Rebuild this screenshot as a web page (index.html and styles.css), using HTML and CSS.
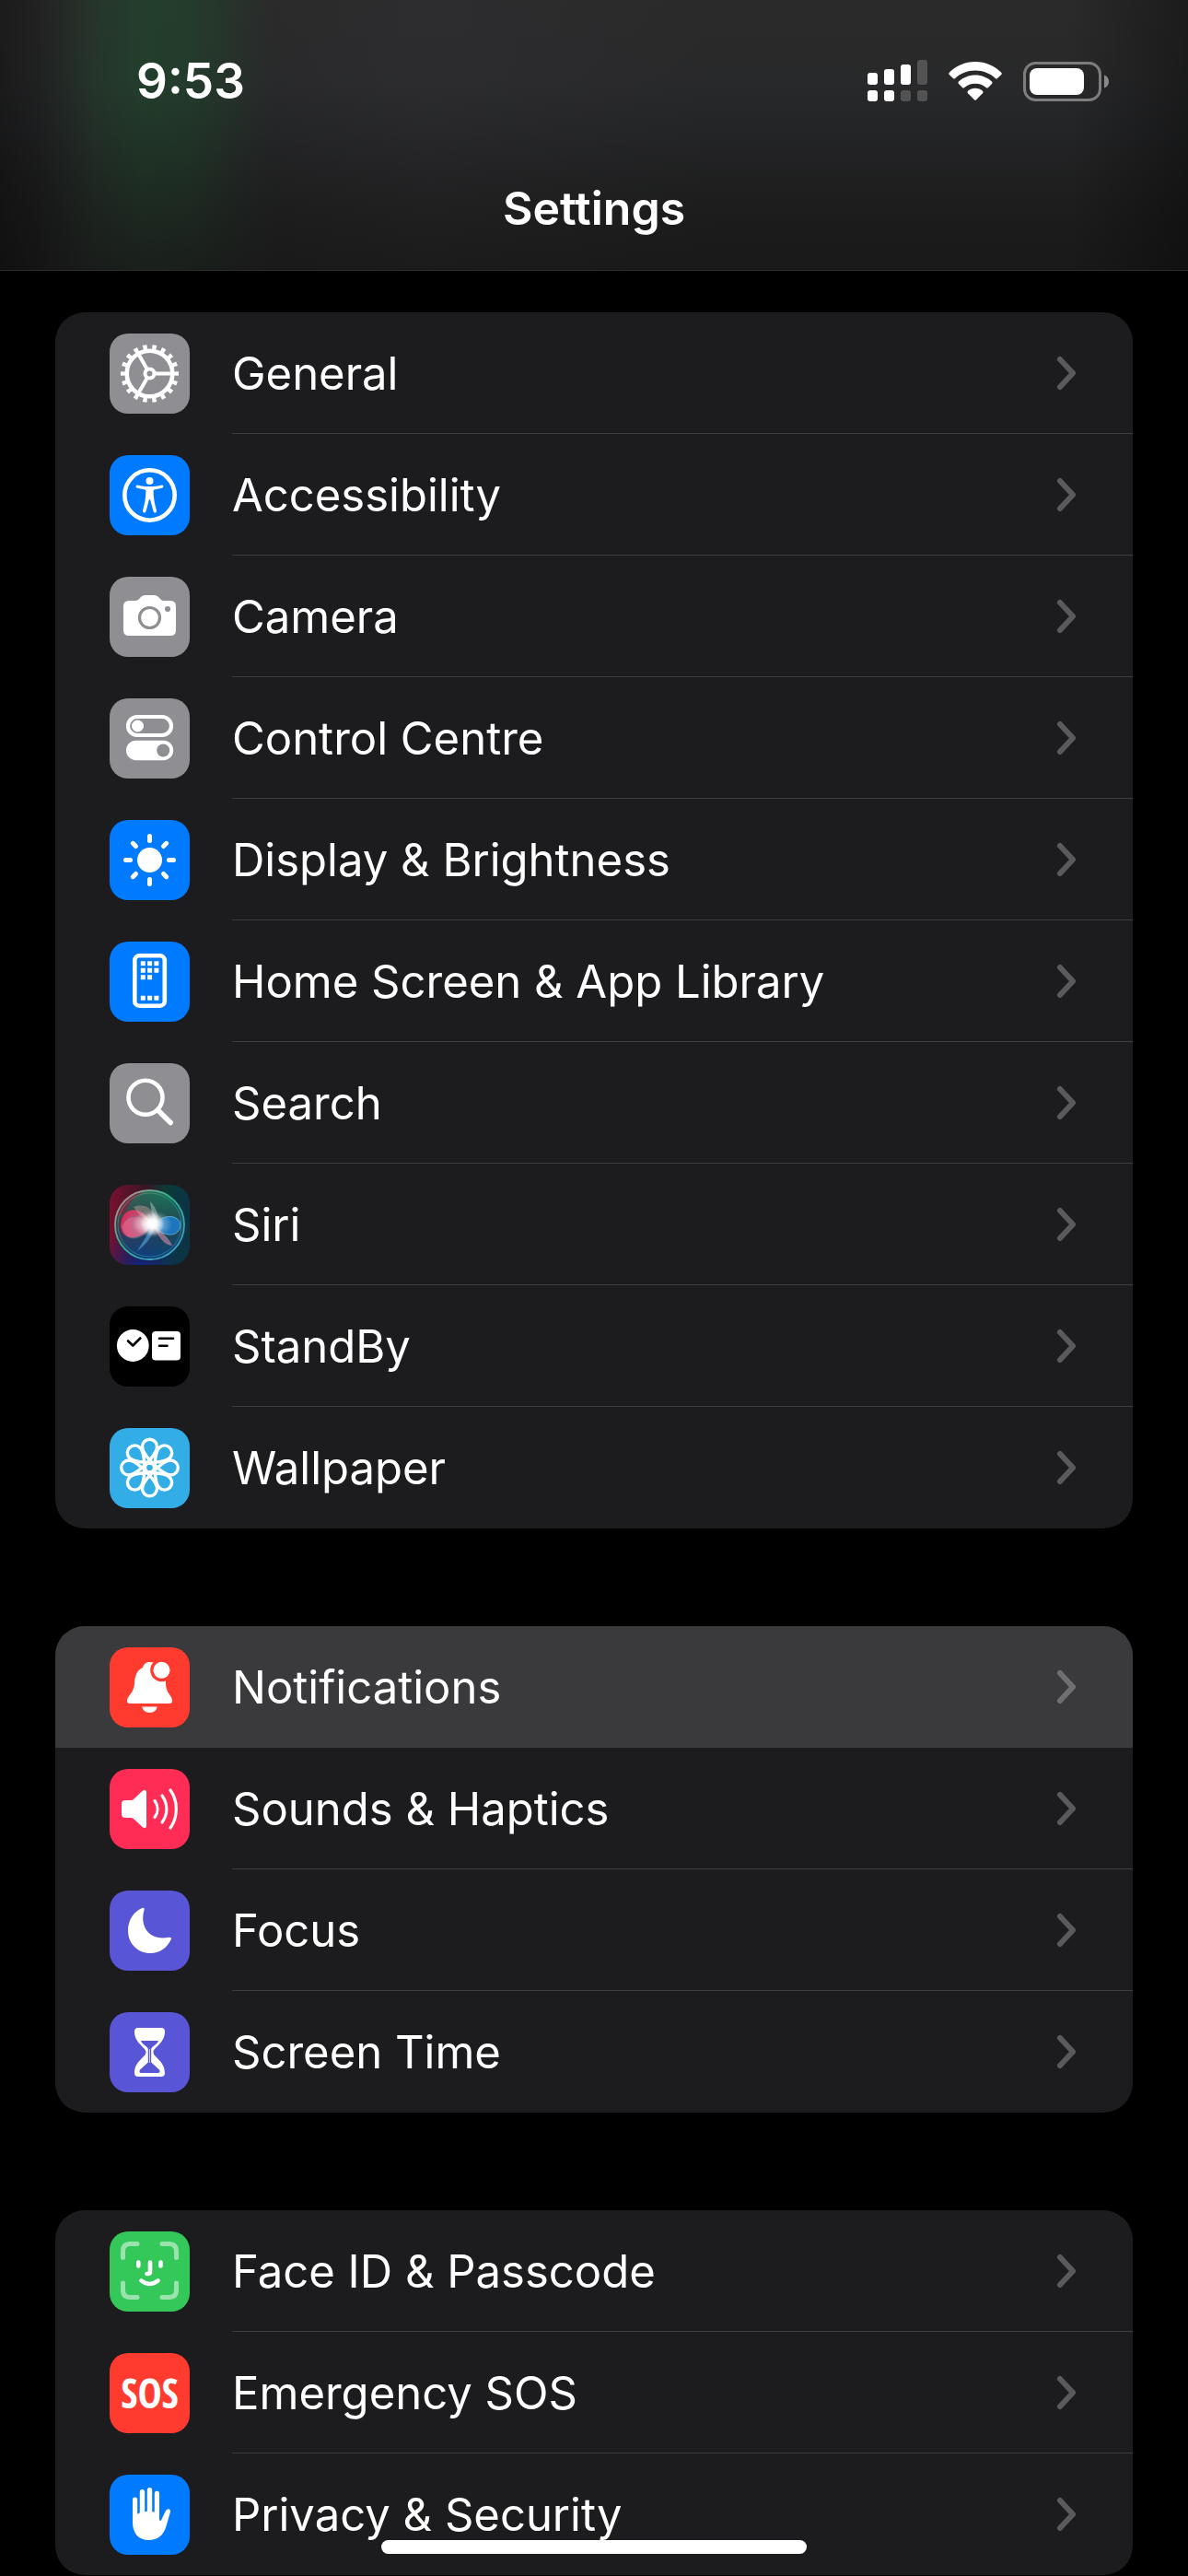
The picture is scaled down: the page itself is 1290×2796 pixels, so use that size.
FILE: index.html
```html
<!DOCTYPE html>
<html lang="en-GB">
<head>
    <meta charset="UTF-8">
    <meta name="viewport" content="width=device-width, initial-scale=1">
    <title>Settings</title>
    <link rel="stylesheet" href="styles.css">
</head>
<body>
    <svg class="sprite" aria-hidden="true">
        <symbol id="chevron" viewBox="0 0 22 38">
            <path d="M4 4 L18 19 L4 34" fill="none" stroke="currentColor" stroke-width="6" stroke-linecap="round" stroke-linejoin="round"/>
        </symbol>
    </svg>

    <header class="header">
        <div class="status-bar">
            <time class="clock">9:53</time>
            <div class="status-icons">
                <svg class="signal" viewBox="0 0 65 46" fill="#fff">
                    <rect x="0" y="14" width="11" height="13" rx="3"/>
                    <rect x="18" y="10" width="11" height="17" rx="3"/>
                    <rect x="36" y="5" width="11" height="22" rx="3"/>
                    <rect x="54" y="0" width="11" height="27" rx="3" opacity=".2"/>
                    <rect x="0" y="33" width="11" height="12" rx="3"/>
                    <rect x="18" y="33" width="11" height="12" rx="3"/>
                    <rect x="36" y="33" width="11" height="12" rx="3" opacity=".2"/>
                    <rect x="54" y="33" width="11" height="12" rx="3" opacity=".2"/>
                </svg>
                <svg class="wifi" viewBox="0 0 58 43" fill="#fff">
                    <path d="M29 0 C40 0 50 4.500 57 11.500 Q58.500 13 57 14.300 L53 18 Q52 19 50.800 18 C45 12.500 37.500 9.500 29 9.500 S13 12.500 7.200 18 Q6 19 5 18 L1 14.300 Q-.5 13 1 11.500 C8 4.500 18 0 29 0Z"/>
                    <path d="M29 14.500 C36 14.500 42.300 17.200 47 21.500 Q48.300 22.700 47 24 L43 28 Q42 29 40.800 28 C37.500 25.200 33.500 23.700 29 23.700 S20.500 25.200 17.200 28 Q16 29 15 28 L11 24 Q9.700 22.700 11 21.500 C15.700 17.200 22 14.500 29 14.500Z"/>
                    <path d="M29 28.800 C32 28.800 35 30 37 31.800 Q38.300 33 37 34.300 L30 41.300 Q29 42.300 28 41.300 L21 34.300 Q19.700 33 21 31.800 C23 30 26 28.800 29 28.800Z"/>
                </svg>
                <svg class="battery" viewBox="0 0 93 43">
                    <rect x="1.500" y="1.500" width="82" height="40" rx="12" fill="none" stroke="#7d7d7d" stroke-width="3"/>
                    <rect x="7" y="7" width="59" height="29" rx="8" fill="#fff"/>
                    <path d="M88 14.500 C91 15.500 93 18 93 21.500 S91 27.500 88 28.500Z" fill="#8a8a8a"/>
                </svg>
            </div>
        </div>
        <h1 class="title">Settings</h1>
    </header>

    <main class="settings">
        <ul class="group">
            <li><a class="row" href="#general">
                <svg class="icon gray" viewBox="0 0 87 87" fill="none" stroke="#fff">
                    <circle cx="43.500" cy="43.500" r="28.500" stroke-width="6" pathLength="180" stroke-dasharray="4.400 5.600 4.400 5.600" stroke-dashoffset="2.200"/>
                    <circle cx="43.500" cy="43.500" r="24.800" stroke-width="4.600"/>
                    <circle cx="43.500" cy="43.500" r="5" stroke-width="4"/>
                    <path d="M49 43.500H68 M40.800 38.700L31.500 22.500 M40.800 48.300L31.500 64.500" stroke-width="4"/>
                </svg>
                <span class="label">General</span>
                <svg class="chevron"><use href="#chevron"/></svg>
            </a></li>
            <li><a class="row" href="#accessibility">
                <svg class="icon blue" viewBox="0 0 87 87" fill="#fff">
                    <circle cx="43.500" cy="43.500" r="27.200" fill="none" stroke="#fff" stroke-width="4.600"/>
                    <circle cx="43.500" cy="28" r="4"/>
                    <path d="M30.300 32.500 C38 34.500 49 34.500 56.700 32.500 Q58.300 32.300 58.500 34 Q58.500 35.300 57 35.700 L48.500 37.500 Q47.500 38 47.600 39 C47.700 47 49 53 51 60 Q51.300 62 49.700 62.500 Q48.200 62.700 47.500 61 L44.300 49 Q43.500 47 42.700 49 L39.500 61 Q38.800 62.700 37.300 62.500 Q35.700 62 36 60 C38 53 39.300 47 39.400 39 Q39.500 38 38.500 37.500 L30 35.700 Q28.500 35.300 28.500 34 Q28.700 32.300 30.300 32.500Z"/>
                </svg>
                <span class="label">Accessibility</span>
                <svg class="chevron"><use href="#chevron"/></svg>
            </a></li>
            <li><a class="row" href="#camera">
                <svg class="icon gray" viewBox="0 0 87 87">
                    <path d="M21 26 H28 Q30 26 31.500 24.500 L34.500 21.500 Q36 20 38 20 H49 Q51 20 52.500 21.500 L55.500 24.500 Q57 26 59 26 H66 Q72 26 72 32 V58 Q72 64 66 64 H21 Q15 64 15 58 V32 Q15 26 21 26Z" fill="#fff"/>
                    <circle cx="43.500" cy="44.500" r="11" fill="none" stroke="#8e8e93" stroke-width="3.200"/>
                    <circle cx="63" cy="35" r="3" fill="#8e8e93"/>
                </svg>
                <span class="label">Camera</span>
                <svg class="chevron"><use href="#chevron"/></svg>
            </a></li>
            <li><a class="row" href="#control-centre">
                <svg class="icon gray" viewBox="0 0 87 87" fill="#fff">
                    <rect x="20" y="20" width="47" height="20" rx="10" fill="none" stroke="#fff" stroke-width="4.200"/>
                    <circle cx="30.500" cy="30" r="6.500"/>
                    <rect x="18" y="45.700" width="51.200" height="21.500" rx="10.700"/>
                    <circle cx="58.200" cy="56.500" r="7" fill="#8e8e93"/>
                </svg>
                <span class="label">Control Centre</span>
                <svg class="chevron"><use href="#chevron"/></svg>
            </a></li>
            <li><a class="row" href="#display">
                <svg class="icon blue" viewBox="0 0 87 87" stroke="#fff" stroke-width="5" stroke-linecap="round">
                    <circle cx="43.500" cy="43.500" r="13.500" fill="#fff" stroke="none"/>
                    <path d="M43.500 17.500V22.500 M43.500 64.500V69.500 M17.500 43.500H22.500 M64.500 43.500H69.500 M25.300 25.300L28.500 28.500 M58.500 58.500L61.700 61.700 M61.700 25.300L58.500 28.500 M28.500 58.500L25.300 61.700"/>
                </svg>
                <span class="label">Display &amp; Brightness</span>
                <svg class="chevron"><use href="#chevron"/></svg>
            </a></li>
            <li><a class="row" href="#home-screen">
                <svg class="icon blue" viewBox="0 0 87 87" fill="#fff">
                    <rect x="27.300" y="15.300" width="32.500" height="54.400" rx="5" fill="none" stroke="#fff" stroke-width="4.600"/>
                    <path d="M33.800 21.300h5v5h-5z M41.100 21.300h5v5h-5z M48.400 21.300h5v5h-5z M33.800 28.800h5v5h-5z M41.100 28.800h5v5h-5z M48.400 28.800h5v5h-5z M33.800 36.300h5v5h-5z M41.100 36.300h5v5h-5z M33.800 58.700h5v5h-5z M41.100 58.700h5v5h-5z M48.400 58.700h5v5h-5z"/>
                </svg>
                <span class="label">Home Screen &amp; App Library</span>
                <svg class="chevron"><use href="#chevron"/></svg>
            </a></li>
            <li><a class="row" href="#search">
                <svg class="icon gray" viewBox="0 0 87 87" fill="none" stroke="#fff" stroke-linecap="round">
                    <circle cx="39" cy="37.300" r="18.500" stroke-width="4.600"/>
                    <path d="M53 51.500L66.200 64.500" stroke-width="5.600"/>
                </svg>
                <span class="label">Search</span>
                <svg class="chevron"><use href="#chevron"/></svg>
            </a></li>
            <li><a class="row" href="#siri">
                <svg class="icon siri" viewBox="0 0 87 87">
                    <defs>
                        <linearGradient id="ring" x1="0" y1="0" x2="1" y2="1">
                            <stop offset="0" stop-color="#c98a93"/>
                            <stop offset=".45" stop-color="#2fb58a"/>
                            <stop offset="1" stop-color="#3f9ae0"/>
                        </linearGradient>
                        <linearGradient id="orb" x1="0" y1="0" x2="0" y2="1">
                            <stop offset="0" stop-color="#1f8a68"/>
                            <stop offset=".5" stop-color="#2a4a58"/>
                            <stop offset="1" stop-color="#0b4a86"/>
                        </linearGradient>
                        <radialGradient id="pink" cx=".8" cy=".5" r=".8">
                            <stop offset="0" stop-color="#f6b6c8"/>
                            <stop offset=".5" stop-color="#cf4f78"/>
                            <stop offset="1" stop-color="#ff2458"/>
                        </radialGradient>
                        <radialGradient id="flare">
                            <stop offset="0" stop-color="#fff"/>
                            <stop offset=".35" stop-color="#fff" stop-opacity=".95"/>
                            <stop offset="1" stop-color="#fff" stop-opacity="0"/>
                        </radialGradient>
                    </defs>
                    <circle cx="43.500" cy="43.500" r="37" fill="url(#orb)" opacity=".75"/>
                    <path d="M8 35 C8 18 22 7 38 7 C24 14 20 22 17 30Z" fill="#8b1f3c" opacity=".7"/>
                    <path d="M46 43 C36 22 14 22 12 43 C12 62 34 62 46 43Z" fill="url(#pink)" opacity=".85"/>
                    <path d="M46 43 C38 34 18 30 14 46 C18 66 40 58 46 43Z" fill="#e99ab8" stroke="#7fb8c8" stroke-width="1" opacity=".35"/>
                    <path d="M48 44 C58 30 76 33 77 43 C77 57 58 58 48 44Z" fill="#1c7fd0" stroke="#5fc0e8" stroke-width="1" opacity=".85"/>
                    <path d="M26 24 C36 20 50 24 51 42 C42 42 32 34 26 24Z" fill="#f0b7b0" opacity=".35"/>
                    <path d="M44 18 C52 26 54 36 51 42 C47 36 45 28 44 18Z" fill="#cfe8da" opacity=".4"/>
                    <path d="M47 44 L30 72 C40 64 48 56 48 44Z" fill="#4fa6e8" opacity=".6"/>
                    <path d="M48 44 C58 52 66 60 68 66 C60 66 52 56 48 44Z" fill="#d08ba6" opacity=".6"/>
                    <ellipse cx="46" cy="42.500" rx="22" ry="15" fill="url(#flare)" opacity=".5"/>
                    <ellipse cx="46.500" cy="42.500" rx="13" ry="13" fill="url(#flare)"/>
                    <circle cx="43.500" cy="43.500" r="37.500" fill="none" stroke="url(#ring)" stroke-width="1.800"/>
                    <circle cx="43.500" cy="43.500" r="34.500" fill="none" stroke="url(#ring)" stroke-width="1" opacity=".5"/>
                </svg>
                <span class="label">Siri</span>
                <svg class="chevron"><use href="#chevron"/></svg>
            </a></li>
            <li><a class="row" href="#standby">
                <svg class="icon black" viewBox="0 0 87 87" fill="none" stroke="#000" stroke-linecap="round" stroke-linejoin="round">
                    <circle cx="25.300" cy="42.500" r="17.400" fill="#fff" stroke="none"/>
                    <path d="M20 37.500L25.300 42.500L33.300 34.500" stroke-width="2.600"/>
                    <rect x="46" y="27" width="31" height="31.500" rx="4" fill="#fff" stroke="none"/>
                    <path d="M54 34.800H69 M54 42.700H62.500" stroke-width="2.600"/>
                </svg>
                <span class="label">StandBy</span>
                <svg class="chevron"><use href="#chevron"/></svg>
            </a></li>
            <li><a class="row" href="#wallpaper">
                <svg class="icon cyan" viewBox="-43.500 -43 87 87" fill="none" stroke="#fff" stroke-width="3.400">
                    <g id="petals">
                        <path d="M-4.500 -3 C-1 -8 8 -15 8 -22.800 A8 8 0 0 0 -8 -22.800 C-8 -15 1 -8 4.500 -3"/>
                        <path transform="rotate(90)" d="M-4.500 -3 C-1 -8 8 -15 8 -22.800 A8 8 0 0 0 -8 -22.800 C-8 -15 1 -8 4.500 -3"/>
                        <path transform="rotate(180)" d="M-4.500 -3 C-1 -8 8 -15 8 -22.800 A8 8 0 0 0 -8 -22.800 C-8 -15 1 -8 4.500 -3"/>
                        <path transform="rotate(270)" d="M-4.500 -3 C-1 -8 8 -15 8 -22.800 A8 8 0 0 0 -8 -22.800 C-8 -15 1 -8 4.500 -3"/>
                    </g>
                    <use href="#petals" transform="rotate(45)"/>
                    <circle r="5"/>
                </svg>
                <span class="label">Wallpaper</span>
                <svg class="chevron"><use href="#chevron"/></svg>
            </a></li>
        </ul>

        <ul class="group">
            <li><a class="row active" href="#notifications">
                <svg class="icon red" viewBox="0 0 87 87" fill="#fff">
                    <path d="M43.500 16 C39 16 37 18.500 36 22 C29.500 25 27.500 31 27 39 C26.500 50 19 52.500 19 58 Q19 61 22 61 H65 Q68 61 68 58 C68 52.500 61.500 50 61 40 V30 L48 16.500Z"/>
                    <path d="M35.300 64.500 H51.700 Q50.500 71 43.500 71 T35.300 64.500Z"/>
                    <circle cx="56.500" cy="24.800" r="10.700" stroke="#ff3b30" stroke-width="3.300"/>
                </svg>
                <span class="label">Notifications</span>
                <svg class="chevron"><use href="#chevron"/></svg>
            </a></li>
            <li><a class="row" href="#sounds">
                <svg class="icon pink" viewBox="0 0 87 87" fill="none" stroke="#fff" stroke-width="3.200" stroke-linecap="round">
                    <path d="M17 34 H23 Q25 34 26.500 32.500 L35.500 24 Q37 22.700 38.500 22.900 Q40 23.200 40 25 V62 Q40 63.800 38.500 64.100 Q37 64.300 35.500 63 L26.500 54.500 Q25 53 23 53 H17 Q13 53 13 49 V38 Q13 34 17 34Z" fill="#fff" stroke="none"/>
                    <path d="M49 34.500 C53 40 53 47 49 52.500 M57 29 C63.500 38 63.500 49 57 58 M66 23 C74.500 35 74.500 52 66 64"/>
                </svg>
                <span class="label">Sounds &amp; Haptics</span>
                <svg class="chevron"><use href="#chevron"/></svg>
            </a></li>
            <li><a class="row" href="#focus">
                <svg class="icon indigo" viewBox="0 0 87 87" fill="#fff">
                    <path d="M35.300 19 Q38.200 18.200 37.600 21 C32.500 38 42 55 64.500 50.800 Q67.700 50.500 66.800 53 C62.500 62.500 54 68 44.500 68 C30.500 68 20 57.500 20 43.500 C20 32 26 23 35.300 19Z"/>
                </svg>
                <span class="label">Focus</span>
                <svg class="chevron"><use href="#chevron"/></svg>
            </a></li>
            <li><a class="row" href="#screen-time">
                <svg class="icon indigo" viewBox="0 0 87 87">
                    <path d="M31 17 H56 Q60 17 60 21 C60 34 47.500 38 47.500 43.500 S60 53 60 66 Q60 70 56 70 H31 Q27 70 27 66 C27 53 39.500 49 39.500 43.500 S27 34 27 21 Q27 17 31 17Z" fill="#fff"/>
                    <path d="M34 31 H53 C52 35 45.500 37.500 45.200 40 V54.500 L54 62.500 Q55.500 65 53 66 H34 Q31.500 65 33 62.500 L41.800 54.500 V40 C41.500 37.500 35 35 34 31Z" fill="#5856d6"/>
                    <path d="M43.500 40V55" stroke="#c9c8f3" stroke-width="1"/>
                </svg>
                <span class="label">Screen Time</span>
                <svg class="chevron"><use href="#chevron"/></svg>
            </a></li>
        </ul>

        <ul class="group">
            <li><a class="row" href="#face-id">
                <svg class="icon green" viewBox="0 0 87 87" fill="none" stroke="#fff" stroke-width="5" stroke-linecap="round">
                    <path d="M14.500 28.500V21.500Q14.500 13.500 22.500 13.500H30 M57 13.500H64.500Q72.500 13.500 72.500 21.500V28.500 M72.500 56V63.500Q72.500 71.500 64.500 71.500H57 M30 71.500H22.500Q14.500 71.500 14.500 63.500V56" opacity=".5"/>
                    <path d="M31.300 33.500V37.500 M55.500 33.500V37.500 M44 33.500V43.500Q44 46 41.500 46H40.500 M34.500 53.500Q43.500 60.500 52.500 53.500" stroke-width="4.600"/>
                </svg>
                <span class="label">Face ID &amp; Passcode</span>
                <svg class="chevron"><use href="#chevron"/></svg>
            </a></li>
            <li><a class="row" href="#sos">
                <span class="icon red sos" aria-hidden="true">SOS</span>
                <span class="label">Emergency SOS</span>
                <svg class="chevron"><use href="#chevron"/></svg>
            </a></li>
            <li><a class="row" href="#privacy">
                <svg class="icon blue" viewBox="0 0 87 87" fill="#fff">
                    <path d="M25 52V27Q25 24.400 27.600 24.400T30.200 27V42.500Q31.700 43 32.800 41V19Q32.800 16 35.500 16T38.200 19V40Q39.500 40.500 40.800 39.700V17Q40.800 14 43.500 14T46.200 17V40Q47.500 40.800 48.800 40.500V20.500Q48.800 17.800 51.400 17.800T54 20.500V49Q55.300 51 56.500 48.500L60.500 40Q62 37 64.300 37.300Q66.500 38.300 65.800 41L61.500 56C58.500 66 52 71 42.500 71C31 71 25 63 25 52Z"/>
                </svg>
                <span class="label">Privacy &amp; Security</span>
                <svg class="chevron"><use href="#chevron"/></svg>
            </a></li>
        </ul>
    </main>

    <div class="home-indicator"></div>
</body>
</html>
```

FILE: styles.css
```css
* {
    box-sizing: border-box;
}
body {
    margin: 0;
    min-height: 100vh;
    background-color: #000;
    color: #fff;
    font-family: Inter, Roboto, "Liberation Sans", sans-serif;
}
.sprite {
    display: none;
}

/* header */
.header {
    height: 294px;
    border-bottom: 1px solid #2a2a2a;
    background:
        linear-gradient(90deg, rgba(0, 0, 0, 0.35), transparent 8%, transparent 90%, rgba(0, 0, 0, 0.35)),
        linear-gradient(180deg, transparent 30%, rgba(24, 24, 24, 0.8)),
        linear-gradient(90deg, transparent 3%, rgba(34, 66, 44, 0.85) 12%, rgba(34, 66, 44, 0.75) 16%, transparent 23%),
        linear-gradient(90deg, rgba(48, 48, 52, 0) 20%, rgba(48, 48, 52, 0.5) 36%, rgba(48, 48, 52, 0) 60%),
        linear-gradient(180deg, #2a2a2a, #27282a 50%, #1e1e1e);
}
.status-bar {
    display: flex;
    justify-content: space-between;
    align-items: center;
    height: 176px;
    padding: 0 86px 0 148px;
}
.clock {
    font-size: 53px;
    font-weight: 600;
}
.status-icons {
    display: flex;
    align-items: center;
    gap: 23px;
}
.signal {
    width: 65px;
    height: 46px;
}
.wifi {
    width: 58px;
    height: 43px;
}
.battery {
    width: 93px;
    height: 43px;
}
.title {
    margin: 18px 0 0;
    font-size: 50px;
    line-height: 64px;
    font-weight: 600;
    text-align: center;
}

/* list groups */
.settings {
    display: flex;
    flex-direction: column;
    gap: 106px;
    padding: 45px 60px 0;
}
.group {
    list-style: none;
    margin: 0;
    padding: 0;
    overflow: hidden;
    border-radius: 32px;
    background-color: #1c1c1e;
}
.row {
    position: relative;
    display: flex;
    align-items: center;
    height: 132px;
    padding: 0 61px 0 59px;
    color: inherit;
    text-decoration: none;
}
.row::after {
    content: "";
    position: absolute;
    left: 192px;
    right: 0;
    bottom: 0;
    height: 1px;
    background-color: #3d3d41;
}
.row.active::after,
.group li:last-child .row::after {
    display: none;
}
.row.active {
    background-color: #3a3a3c;
}
.label {
    flex: 1;
    padding-top: 2px;
    font-size: 49px;
    line-height: 64px;
}
.chevron {
    width: 22px;
    height: 38px;
    color: #5a5a5e;
}
.active .chevron {
    color: #6f6f73;
}

/* icons */
.icon {
    flex: none;
    width: 87px;
    height: 87px;
    margin-right: 46px;
    border-radius: 20px;
}
.gray {
    background-color: #8e8e93;
}
.blue {
    background-color: #007aff;
}
.black {
    background-color: #000;
}
.cyan {
    background-color: #32ade6;
}
.red {
    background-color: #ff3b30;
}
.pink {
    background-color: #ff2d55;
}
.indigo {
    background-color: #5856d6;
}
.green {
    background-color: #34c759;
}
.siri {
    background:
        radial-gradient(circle at 40% 100%, #10247a, transparent 45%),
        linear-gradient(90deg, #78102f, #3a1526 45%, #0b3a36 70%, #0c3347);
}
.sos {
    display: flex;
    align-items: center;
    justify-content: center;
    font-family: "Liberation Sans Narrow", "Open Sans Condensed", "Roboto Condensed", Roboto, sans-serif;
    font-size: 44px;
    font-weight: 700;
}

.home-indicator {
    position: fixed;
    left: 50%;
    bottom: 24px;
    width: 462px;
    height: 15px;
    margin-left: -231px;
    border-radius: 8px;
    background-color: #fff;
}
```
